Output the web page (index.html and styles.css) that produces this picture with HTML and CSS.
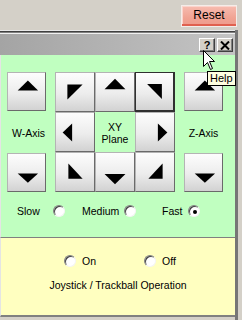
FILE: index.html
```html
<!DOCTYPE html>
<html lang="en">
<head>
    <meta charset="UTF-8">
    <title>Jog Panel</title>
    <link rel="stylesheet" href="styles.css">
</head>
<body>
    <div class="topbar">
        <button class="reset">Reset</button>
    </div>
    <div class="panel">
        <div class="rule"></div>
        <div class="titlebar">
            <span class="tbtn">?</span>
            <span class="tbtn">
                <svg width="10" height="9" viewBox="0 0 10 9"><path d="M1 0.5 L9 8.5 M9 0.5 L1 8.5" stroke="#000" stroke-width="2"/></svg>
            </span>
        </div>
        <div class="motion">
            <div class="pad">
                <button class="key side w-up"><svg viewBox="0 0 39 40"><polygon points="10,19 32,19 21,8"/></svg></button>
                <button class="key"><svg viewBox="0 0 40 40"><polygon points="12,12 28,12 12,28"/></svg></button>
                <button class="key"><svg viewBox="0 0 40 40"><polygon points="9,17 31,17 20,6"/></svg></button>
                <button class="key hot"><svg viewBox="0 0 40 40"><polygon points="12,12 28,12 28,28"/></svg></button>
                <button class="key side z-up"><svg viewBox="0 0 39 40"><polygon points="10,19 32,19 21,8"/></svg></button>

                <span class="axis w-label">W-Axis</span>
                <button class="key"><svg viewBox="0 0 40 40"><polygon points="7,20.5 17,11 17,30"/></svg></button>
                <span class="plane">XY<br>Plane</span>
                <button class="key"><svg viewBox="0 0 40 40"><polygon points="33,20.5 23,11 23,30"/></svg></button>
                <span class="axis z-label">Z-Axis</span>

                <button class="key side w-down"><svg viewBox="0 0 39 40"><polygon points="10,21 32,21 21,31"/></svg></button>
                <button class="key"><svg viewBox="0 0 40 40"><polygon points="13,11 13,27 28,27"/></svg></button>
                <button class="key"><svg viewBox="0 0 40 40"><polygon points="9,22 31,22 20,33"/></svg></button>
                <button class="key"><svg viewBox="0 0 40 40"><polygon points="28,11 28,27 13,27"/></svg></button>
                <button class="key side z-down"><svg viewBox="0 0 39 40"><polygon points="10,21 32,21 21,31"/></svg></button>
            </div>
            <div class="speeds">
                <span>Slow</span><span class="radio"></span>
                <span>Medium</span><span class="radio"></span>
                <span>Fast</span><span class="radio checked"></span>
            </div>
        </div>
        <div class="joystick">
            <div class="onoff">
                <span class="radio"></span><span class="opt">On</span>
                <span class="radio"></span><span class="opt">Off</span>
            </div>
            <div class="caption">Joystick / Trackball Operation</div>
        </div>
    </div>

    <svg class="cursor" width="13" height="21" viewBox="0 0 13 21">
        <path d="M0.5 0.5 L0.5 16.5 L4.5 12.5 L7.5 19.5 L9.5 18.5 L6.5 11.5 L11.5 11.5 Z" fill="#fff" stroke="#000"/>
    </svg>
    <div class="tooltip">Help</div>
</body>
</html>
```

FILE: styles.css
```css
* {
    box-sizing: border-box;
}
body {
    margin: 0;
    width: 242px;
    height: 320px;
    overflow: hidden;
    position: relative;
    background-color: #d4d0c8;
    font-family: "Liberation Sans", Arial, sans-serif;
    font-size: 10.5px;
    color: #000;
}
.topbar {
    height: 30px;
    display: flex;
    justify-content: flex-end;
    align-items: flex-start;
    padding: 5px 5px 0 0;
}
.reset {
    width: 56px;
    height: 22px;
    padding: 0 0 2px;
    font-family: "Liberation Sans", Arial, sans-serif;
    font-size: 12px;
    color: #000;
    background: linear-gradient(#f7bcb0, #f1a393 60%, #ee9a8a);
    border: 1px solid #f4ece8;
    box-shadow: inset 0 -2px 0 #e0604e, inset 1px 1px 0 #fbd4cc;
}
.panel {
    width: 238px;
    height: 290px;
    border-right: 3px solid #767676;
    display: flex;
    flex-direction: column;
}
.rule {
    height: 4px;
    background: linear-gradient(#e8e8e8 0 1px, #404040 1px 2px, #808080 2px 3px, #f0f0f0 3px 4px);
}
.titlebar {
    height: 21px;
    display: flex;
    justify-content: flex-end;
    gap: 2px;
    padding: 4px 2px 0 0;
    background: linear-gradient(90deg, #a4a4a4, #c4c4c4);
}
.tbtn {
    width: 16px;
    height: 14px;
    display: flex;
    justify-content: center;
    align-items: center;
    font-size: 11px;
    font-weight: bold;
    background-color: #d4d0c8;
    border: 1px solid;
    border-color: #ffffff #404040 #404040 #ffffff;
    box-shadow: inset -1px -1px 0 #808080;
}
.motion {
    height: 183px;
    padding-top: 17px;
    background-color: #c0ffc0;
    border-left: 1px solid #e4e4e4;
    border-bottom: 1px solid #808080;
}
.pad {
    display: grid;
    grid-template-columns: 48px 40px 40px 40px 48px;
    grid-template-rows: 40px 40px 40px;
    padding-left: 6px;
}
.key {
    width: 40px;
    height: 40px;
    padding: 0;
    display: block;
    background: linear-gradient(#fdfdfd, #ececec 55%, #d2d2d2);
    border: 1px solid;
    border-color: #b4b4b4 #6a6a6a #6a6a6a #b4b4b4;
}
.key svg {
    display: block;
    width: 100%;
    height: 100%;
    fill: #000;
}
.key.side {
    width: 39px;
    height: 39px;
}
.key.hot {
    border-color: #303030;
    border-width: 1px 2px 2px 1px;
}
.z-up,
.z-down {
    justify-self: end;
}
.w-down,
.z-down {
    align-self: end;
}
.axis {
    align-self: center;
    margin-top: 1px;
}
.w-label {
    width: 39px;
    text-align: center;
    padding-left: 4px;
}
.z-label {
    justify-self: end;
    width: 39px;
    text-align: center;
}
.plane {
    align-self: center;
    text-align: center;
    line-height: 12px;
    margin-top: 2px;
}
.speeds {
    display: grid;
    grid-template-columns: 36px 29px 42px 38px 26px 12px;
    align-items: center;
    margin-top: 13px;
    padding-left: 16px;
    height: 12px;
}
.radio {
    width: 12px;
    height: 12px;
    border-radius: 50%;
    background-color: #fff;
    border: 1px solid;
    border-color: #808080 #f4f4f4 #f4f4f4 #808080;
    box-shadow: inset 1px 1px 0 #404040;
    display: flex;
    justify-content: center;
    align-items: center;
}
.radio.checked::after {
    content: "";
    width: 4px;
    height: 4px;
    margin: 1px 0 0 1px;
    border-radius: 50%;
    background-color: #000;
}
.joystick {
    height: 79px;
    padding-top: 17px;
    background-color: #ffffc0;
    border-left: 1px solid #e4e4e4;
    border-bottom: 2px solid #808080;
}
.onoff {
    display: flex;
    align-items: center;
    height: 12px;
    padding-left: 63px;
}
.opt {
    margin-left: 6px;
    width: 62px;
}
.caption {
    margin-top: 12px;
    line-height: 12px;
    text-align: center;
}
.cursor {
    position: absolute;
    left: 203px;
    top: 50px;
}
.tooltip {
    position: absolute;
    left: 207px;
    top: 71px;
    height: 15px;
    padding: 0 2px;
    line-height: 13px;
    font-size: 11px;
    background-color: #ffffe1;
    border: 1px solid #000;
}
```
